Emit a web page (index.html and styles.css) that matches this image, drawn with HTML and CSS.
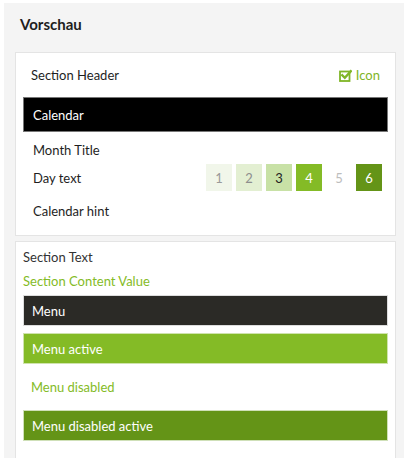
FILE: index.html
```html
<!DOCTYPE html>
<html>
<head>
<meta charset="utf-8">
<link rel="stylesheet" href="styles.css">
</head>
<body>
<div class="panel">
  <h2 class="title">Vorschau</h2>
  <div class="card card-cal">
    <div class="sec-head">
      <span>Section Header</span>
      <span class="icon-label">
        <svg class="chk" width="13" height="13" viewBox="0 0 13 13">
          <rect x="1" y="2.5" width="9.5" height="9.5" fill="none" stroke="#7fb526" stroke-width="1.8"/>
          <path d="M3.3 6.3 L5.8 8.8 L11.8 2.3" fill="none" stroke="#7fb526" stroke-width="2.4" stroke-linecap="square"/>
        </svg>
        Icon
      </span>
    </div>
    <div class="bar bar-black">Calendar</div>
    <div class="cal-row month">Month Title</div>
    <div class="cal-row day-row">
      <span>Day text</span>
      <div class="days">
        <span class="day d1">1</span>
        <span class="day d2">2</span>
        <span class="day d3">3</span>
        <span class="day d4">4</span>
        <span class="day d5">5</span>
        <span class="day d6">6</span>
      </div>
    </div>
    <div class="cal-row hint">Calendar hint</div>
  </div>
  <div class="card card-menu">
    <div class="sec-text">Section Text</div>
    <div class="sec-value">Section Content Value</div>
    <div class="bar menu">Menu</div>
    <div class="bar menu-active">Menu active</div>
    <div class="bar menu-disabled">Menu disabled</div>
    <div class="bar menu-dis-active">Menu disabled active</div>
  </div>
</div>
</body>
</html>
```
FILE: styles.css
```css
html, body {
  margin: 0;
  padding: 0;
  background: #ffffff;
}
body {
  font-family: Lato, "Open Sans", sans-serif;
  font-size: 13px;
  color: #1e1e1e;
  height: 458px;
  overflow: hidden;
}
.panel {
  margin: 3px 0 0 4px;
  background: #f4f4f4;
  padding: 1px 8px 0 11px;
  height: 460px;
  box-sizing: border-box;
  width: 400px;
}
.title {
  margin: 10px 0 0 5px;
  font-size: 15px;
  font-weight: bold;
  line-height: 20px;
  height: 38px;
}
.card {
  background: #fff;
  border: 1px solid #e4e4e4;
  padding: 0 7px;
}
.card-cal {
  height: 182px;
}
.sec-head {
  display: flex;
  justify-content: space-between;
  align-items: center;
  height: 44px;
  padding: 0 8px;
}
.icon-label {
  color: #7fb526;
  display: flex;
  align-items: center;
  gap: 4px;
}
.bar {
  height: 31px;
  display: flex;
  align-items: center;
  padding: 0 8px;
  box-sizing: border-box;
}
.bar-black {
  background: #000;
  color: #fff;
  border: 1px solid #777;
  height: 35px;
  padding-left: 9px;
}
.cal-row {
  display: flex;
  align-items: center;
  padding-left: 10px;
  height: 30px;
}
.month {
  margin-top: 3px;
  height: 29px;
}
.day-row {
  justify-content: space-between;
  padding-right: 6px;
  height: 27px;
}
.hint {
  height: 40px;
}
.days {
  display: flex;
  gap: 4px;
}
.day {
  width: 26px;
  height: 27px;
  display: flex;
  align-items: center;
  justify-content: center;
  font-size: 13px;
}
.d1 { background: #f1f6ea; color: #9a9a9a; }
.d2 { background: #e3efd2; color: #8e8e8e; }
.d3 { background: #c8e1a6; color: #222; }
.d4 { background: #84bb26; color: #fff; }
.d5 { background: transparent; color: #bdbdbd; }
.d6 { background: #649417; color: #fff; }
.card-menu {
  margin-top: 5px;
  height: 240px;
}
.sec-text {
  margin-top: 7px;
  line-height: 17px;
  color: #333;
}
.sec-value {
  margin-top: 7px;
  line-height: 17px;
  color: #84bb26;
}
.menu {
  margin-top: 5px;
  background: #2b2a26;
  color: #fff;
  border: 1px solid #dddddd;
}
.menu-active {
  margin-top: 7px;
  background: #84bb26;
  color: #fff;
  border: 1px solid #cfe3ad;
}
.menu-disabled {
  height: 46px;
  color: #84bb26;
}
.menu-dis-active {
  background: #649417;
  color: #fff;
  border: 1px solid #cfe0b8;
}
```
